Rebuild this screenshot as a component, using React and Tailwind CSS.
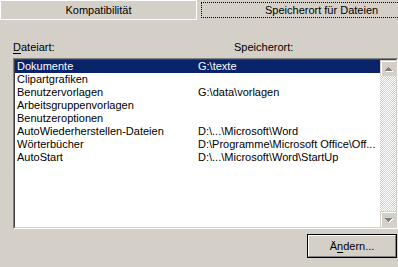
const rows = [
  { name: 'Dokumente', path: 'G:\\texte' },
  { name: 'Clipartgrafiken', path: '' },
  { name: 'Benutzervorlagen', path: 'G:\\data\\vorlagen' },
  { name: 'Arbeitsgruppenvorlagen', path: '' },
  { name: 'Benutzeroptionen', path: '' },
  { name: 'AutoWiederherstellen-Dateien', path: 'D:\\...\\Microsoft\\Word' },
  { name: 'Wörterbücher', path: 'D:\\Programme\\Microsoft Office\\Off...' },
  { name: 'AutoStart', path: 'D:\\...\\Microsoft\\Word\\StartUp' },
];

function Arrow({ down = false }) {
  // classic disabled arrow: gray triangle with white shadow
  const lines = down ? [[0, 7], [1, 5], [2, 3], [3, 1]] : [[3, 1], [2, 3], [1, 5], [0, 7]];
  return (
    <svg width="8" height="5" viewBox="0 0 8 5" shapeRendering="crispEdges">
      {lines.map(([x, w], i) => (
        <rect key={'s' + i} x={x + 1} y={i + 1} width={w} height="1" fill="#ffffff" />
      ))}
      {lines.map(([x, w], i) => (
        <rect key={'a' + i} x={x} y={i} width={w} height="1" fill="#808080" />
      ))}
    </svg>
  );
}

function ScrollButton({ down }) {
  return (
    <div className="w-[16px] h-[16px] border-t border-l border-[#d4d0c8] border-b-[#404040] border-r-[#404040]">
      <div className="w-full h-full bg-[#d4d0c8] border-t border-l border-white border-b-[#808080] border-r-[#808080] flex items-center justify-center">
        <Arrow down={down} />
      </div>
    </div>
  );
}

export default function App() {
  return (
    <div className="w-[398px] h-[267px] overflow-hidden bg-[#d4d0c8] text-black text-[11px] leading-[13px] font-['Liberation_Sans',Arial,sans-serif] select-none">
      {/* Tabs */}
      <div className="flex h-[20px]">
        <div className="w-[197px] h-[20px] border border-white flex items-center justify-center">
          Kompatibilität
        </div>
        <div className="flex-1">
          <div className="ml-[4px] mt-[2px] h-[16px] border border-dotted border-black border-r-0 flex items-center pl-[63px] whitespace-nowrap">
            Speicherort für Dateien
          </div>
        </div>
      </div>

      {/* Labels */}
      <div className="flex mt-[21px] h-[13px]">
        <div className="pl-[13px] w-[234px]">
          <span className="underline underline-offset-[2px]">D</span>ateiart:
        </div>
        <div>Speicherort:</div>
      </div>

      {/* List */}
      <div className="mt-[4px] ml-[13px] w-[385px] h-[171px] border border-t-[#808080] border-l-[#808080] border-b-white border-r-white">
        <div className="w-full h-full flex border border-t-[#404040] border-l-[#404040] border-b-[#d4d0c8] border-r-[#d4d0c8]">
          <div className="flex-1 bg-white">
            {rows.map((r, i) => (
              <div
                key={r.name}
                className={`flex h-[13px] whitespace-nowrap ${i === 0 ? 'bg-[#0a246a] text-white' : ''}`}
              >
                <div className="w-[183px] pl-[2px]">{r.name}</div>
                <div className="flex-1 overflow-hidden">{r.path}</div>
              </div>
            ))}
          </div>
          <div className="w-[16px] flex flex-col">
            <ScrollButton />
            <div className="flex-1 bg-[repeating-conic-gradient(#d4d0c8_0%_25%,#ffffff_0%_50%)] [background-size:2px_2px]" />
            <ScrollButton down />
          </div>
        </div>
      </div>

      {/* Button */}
      <div className="flex justify-end mt-[5px] pr-[1px]">
        <button className="w-[90px] h-[24px] border border-black p-0 bg-[#d4d0c8]">
          <div className="w-full h-full flex items-center justify-center border border-t-white border-l-white border-b-[#808080] border-r-[#808080]">
            <span>
              Ä<span className="underline underline-offset-[2px]">n</span>dern...
            </span>
          </div>
        </button>
      </div>
    </div>
  );
}
